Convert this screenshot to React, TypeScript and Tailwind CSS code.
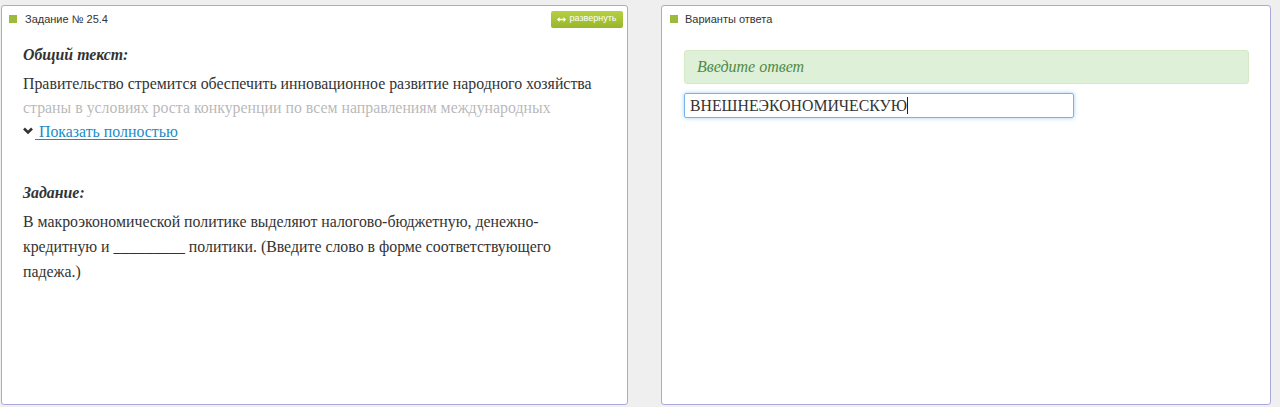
import React from "react";

function Square() {
  return <span className="inline-block w-[8px] h-[8px] bg-[#9dbb3a] shrink-0" />;
}

export default function App() {
  return (
    <div className="w-[1280px] h-[407px] bg-[#efefef] flex gap-[33px] pt-[5px] pl-[1px] font-['Liberation_Sans',Arial,sans-serif]">
      {/* Left panel */}
      <div className="w-[627px] h-[400px] bg-white border border-[#aaa8dc] rounded-[3px] flex flex-col">
        <div className="h-[25px] flex items-center justify-between pl-[7px] pr-[4px] pt-[1px]">
          <div className="flex items-center gap-[8px]">
            <Square />
            <span className="text-[11px] text-[#333]">Задание № 25.4</span>
          </div>
          <button className="h-[17px] w-[72px] rounded-[2px] bg-gradient-to-b from-[#b6d040] to-[#98b62c] text-white text-[9px] flex items-center justify-center gap-[3px]">
            <svg width="9" height="5" viewBox="0 0 9 5" fill="white">
              <path d="M0 2.5 L2.5 0 V1.8 H6.5 V0 L9 2.5 L6.5 5 V3.2 H2.5 V5 Z" />
            </svg>
            <span>развернуть</span>
          </button>
        </div>
        <div className="px-[21px] pt-[12px] text-[15.85px] text-[#333] font-['Liberation_Serif',serif]">
          <p className="font-bold italic leading-[24px]">Общий текст:</p>
          <div className="relative mt-[5px] w-[586px] h-[48px] overflow-hidden leading-[24px]">
            <p>
              Правительство стремится обеспечить инновационное развитие народного хозяйства страны в условиях роста конкуренции по всем направлениям международных экономических отношений.
            </p>
            <div className="absolute left-0 right-0 top-[24px] h-[24px] bg-white/65" />
          </div>
          <div className="flex items-center leading-[24px]">
            <svg width="10" height="8" viewBox="0 0 10 8" className="mr-[2px] mt-[-3px] shrink-0">
              <path d="M1 1.5 L5 5.5 L9 1.5" stroke="#333" strokeWidth="2.6" fill="none" />
            </svg>
            <a className="text-[#1b8bc5] underline decoration-[1px] underline-offset-[2px] cursor-pointer whitespace-pre">
              {" Показать полностью"}
            </a>
          </div>
          <p className="font-bold italic leading-[24px] mt-[37px]">Задание:</p>
          <p className="mt-[4px] w-[584px] leading-[25px]">
            В макроэкономической политике выделяют налогово-бюджетную, денежно-кредитную и _________ политики. (Введите слово в форме соответствующего падежа.)
          </p>
        </div>
      </div>

      {/* Right panel */}
      <div className="w-[610px] h-[400px] bg-white border border-[#aaa8dc] rounded-[3px] flex flex-col">
        <div className="h-[25px] flex items-center pl-[8px] pt-[1px] gap-[7px]">
          <Square />
          <span className="text-[11px] text-[#333]">Варианты ответа</span>
        </div>
        <div className="px-[22px] pt-[19px] font-['Liberation_Serif',serif]">
          <div className="w-[565px] h-[34px] bg-[#dff0d8] border border-[#d6e9c6] rounded-[3px] flex items-center pl-[12px]">
            <span className="italic text-[16px] text-[#4f8a45]">Введите ответ</span>
          </div>
          <div className="mt-[9px] w-[390px] h-[25px] border border-[#76b4ea] rounded-[2px] shadow-[0_0_4px_rgba(102,175,233,0.6)] flex items-center pl-[5px] text-[15.8px] text-[#333]">
            <span>ВНЕШНЕЭКОНОМИЧЕСКУЮ</span>
            <span className="inline-block w-[1px] h-[17px] bg-[#222]" />
          </div>
        </div>
      </div>
    </div>
  );
}
